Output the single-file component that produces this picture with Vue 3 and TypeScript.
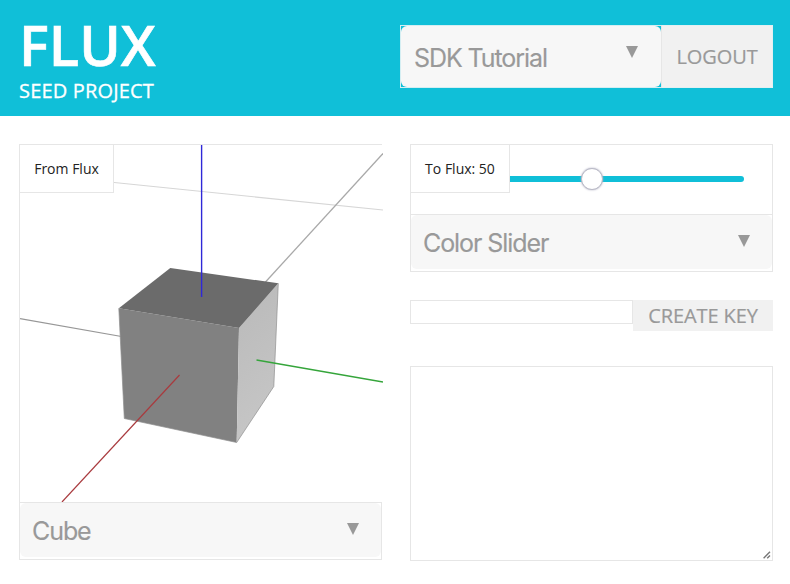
<script setup lang="ts">
import { ref } from 'vue'

interface Line { x1: number; y1: number; x2: number; y2: number; color: string; width: number }

const project = ref('SDK Tutorial')
const inputKey = ref('Cube')
const outputKey = ref('Color Slider')
const sliderValue = ref(50)
const newKey = ref('')
const notes = ref('')

const gridLines: Line[] = [
  { x1: 60, y1: 34, x2: 363, y2: 65, color: '#d6d6d6', width: 1.2 },
  { x1: 363, y1: 8.5, x2: 240, y2: 143, color: '#a9a9a9', width: 1.3 },
  { x1: 0, y1: 173.7, x2: 110, y2: 193, color: '#979797', width: 1.2 },
]
const axes: Line[] = [
  { x1: 181.6, y1: 0, x2: 181.6, y2: 152, color: '#2f28d8', width: 1.4 },
  { x1: 236.5, y1: 215, x2: 363, y2: 237, color: '#35a53b', width: 1.3 },
  { x1: 159.5, y1: 230, x2: 42, y2: 357, color: '#a93a3e', width: 1.2 },
]
</script>

<template>
  <div class="page">
    <header class="header">
      <div class="brand">
        <h1>FLUX</h1>
        <h2>SEED PROJECT</h2>
      </div>
      <div class="session">
        <div class="project-box">
          <div class="select project"><span>{{ project }}</span><i class="arrow"></i></div>
        </div>
        <button class="btn logout">LOGOUT</button>
      </div>
    </header>

    <main class="content">
      <section class="panel viewer">
        <div class="tag from">From Flux</div>
        <svg class="scene" width="363" height="357" viewBox="0 0 363 357">
          <defs>
            <linearGradient id="side" x1="0" y1="0" x2="0.25" y2="1">
              <stop offset="0" stop-color="#b9b9b9" />
              <stop offset="1" stop-color="#c6c6c6" />
            </linearGradient>
          </defs>
          <line v-for="(l, i) in gridLines" :key="'g' + i" :x1="l.x1" :y1="l.y1" :x2="l.x2" :y2="l.y2" :stroke="l.color" :stroke-width="l.width" />
          <polygon points="98.8,163.2 219,183 216.7,297.5 104.3,273.5" fill="#818181" />
          <polygon points="258.3,138.3 219,183 216.7,297.5 253.8,241.5" fill="url(#side)" />
          <polygon points="150.3,123 258.3,138.3 219,183 98.8,163.2" fill="#6b6b6b" />
          <path d="M258.3 138.3L253.8 241.5L216.7 297.5L104.3 273.5L98.8 163.2" fill="none" stroke="#8f8f8f" stroke-width=".7" />
          <line v-for="(l, i) in axes" :key="'a' + i" :x1="l.x1" :y1="l.y1" :x2="l.x2" :y2="l.y2" :stroke="l.color" :stroke-width="l.width" />
        </svg>
        <div class="select-row">
          <div class="select"><span>{{ inputKey }}</span><i class="arrow"></i></div>
        </div>
      </section>

      <div class="column">
        <section class="panel">
          <div class="tag to">To Flux: {{ sliderValue }}</div>
          <div class="slider">
            <div class="track">
              <div class="thumb" :style="{ left: sliderValue + '%' }"></div>
            </div>
          </div>
          <div class="select-row">
            <div class="select"><span>{{ outputKey }}</span><i class="arrow"></i></div>
          </div>
        </section>
        <div class="create">
          <input v-model="newKey" type="text" />
          <button class="btn create-btn">CREATE KEY</button>
        </div>
        <div class="notes">
          <textarea v-model="notes"></textarea>
          <svg class="grip" width="8" height="8" viewBox="0 0 8 8">
            <path d="M.6 7.2L7 .8M4.2 7.2L7 4.4" fill="none" stroke="#777" stroke-width="1.4" />
          </svg>
        </div>
      </div>
    </main>
  </div>
</template>

<style>
body { margin: 0; background: #fff; }
</style>

<style scoped>
.page { width: 790px; height: 584px; overflow: hidden; font-family: "Open Sans", sans-serif; }
.page * { box-sizing: border-box; }
.header { height: 116px; background: #10bfd8; display: flex; justify-content: space-between; align-items: flex-start; padding: 0 17px 0 19px; color: #fff; }
.brand { padding-top: 14px; }
h1 { margin: 0; font-size: 56px; line-height: 60px; font-weight: 600; -webkit-text-stroke: 0.6px currentColor; }
h2 { margin: 3px 0 0; font-size: 20px; line-height: 28px; font-weight: 400; letter-spacing: 0.17px; -webkit-text-stroke: 0.3px currentColor; white-space: nowrap; }
.session { display: flex; margin-top: 25px; height: 63px; }
.project-box { width: 262px; border: 1px solid #d5eef2; border-right-color: #e6e6e6; }
.btn { border: 0; padding: 0; margin: 0; background: #f1f1f1; color: #999; font-family: "Open Sans", sans-serif; font-size: 20px; letter-spacing: -0.1px; -webkit-text-stroke: 0.2px currentColor; white-space: nowrap; }
.logout { width: 111px; border: 1px solid #e3f0f2; border-left: 0; }
.content { display: grid; grid-template-columns: 363px 363px; column-gap: 28px; padding: 28px 17px 0 19px; align-items: start; }
.panel { position: relative; border: 1px solid #e6e6e6; background: #fff; }
.tag { position: absolute; z-index: 1; top: -1px; left: -1px; height: 49px; border: 1px solid #e6e6e6; background: #fff; color: #222; font-size: 14px; line-height: 48px; text-align: center; white-space: nowrap; }
.from { width: 95px; }
.to { width: 100px; }
.scene { display: block; overflow: hidden; margin-right: -2px; background: #fff; }
.select-row { border-top: 1px solid #e6e6e6; height: 57px; padding-bottom: 2px; }
.select { height: 54px; display: flex; align-items: center; justify-content: space-between; padding: 1px 22px 0 12px; border-radius: 6px; background: #f7f7f7; color: #999; font-family: Inter, sans-serif; font-size: 25px; letter-spacing: -1.08px; -webkit-text-stroke: 0.15px currentColor; white-space: nowrap; }
.select.project { height: 61px; padding: 2px 23px 0 13px; }
.arrow { width: 12px; height: 12px; background: #999; clip-path: polygon(0 0, 100% 0, 50% 100%); margin-top: -3px; }
.project .arrow { margin-top: -11px; }
.slider { height: 69px; padding: 31px 28px 0; }
.track { position: relative; height: 6px; border-radius: 3px; background: #10bfd8; }
.thumb { position: absolute; top: -8px; width: 22px; height: 22px; margin-left: -11px; border: 1px solid #b9b9c6; border-radius: 50%; background: #fff; box-shadow: 0 0 2px #aaaabd; }
.create { display: flex; align-items: flex-start; height: 31px; margin-top: 28px; }
input { width: 223px; height: 24px; padding: 0 4px; border: 1px solid #e6e6e6; background: #fff; outline: 0; border-radius: 0; }
.create-btn { width: 140px; height: 31px; }
.notes { position: relative; height: 195px; margin-top: 35px; }
textarea { display: block; width: 363px; height: 195px; border: 1px solid #e6e6e6; resize: none; outline: 0; background: #fff; border-radius: 0; }
.grip { position: absolute; right: 2px; bottom: 2px; }
</style>
